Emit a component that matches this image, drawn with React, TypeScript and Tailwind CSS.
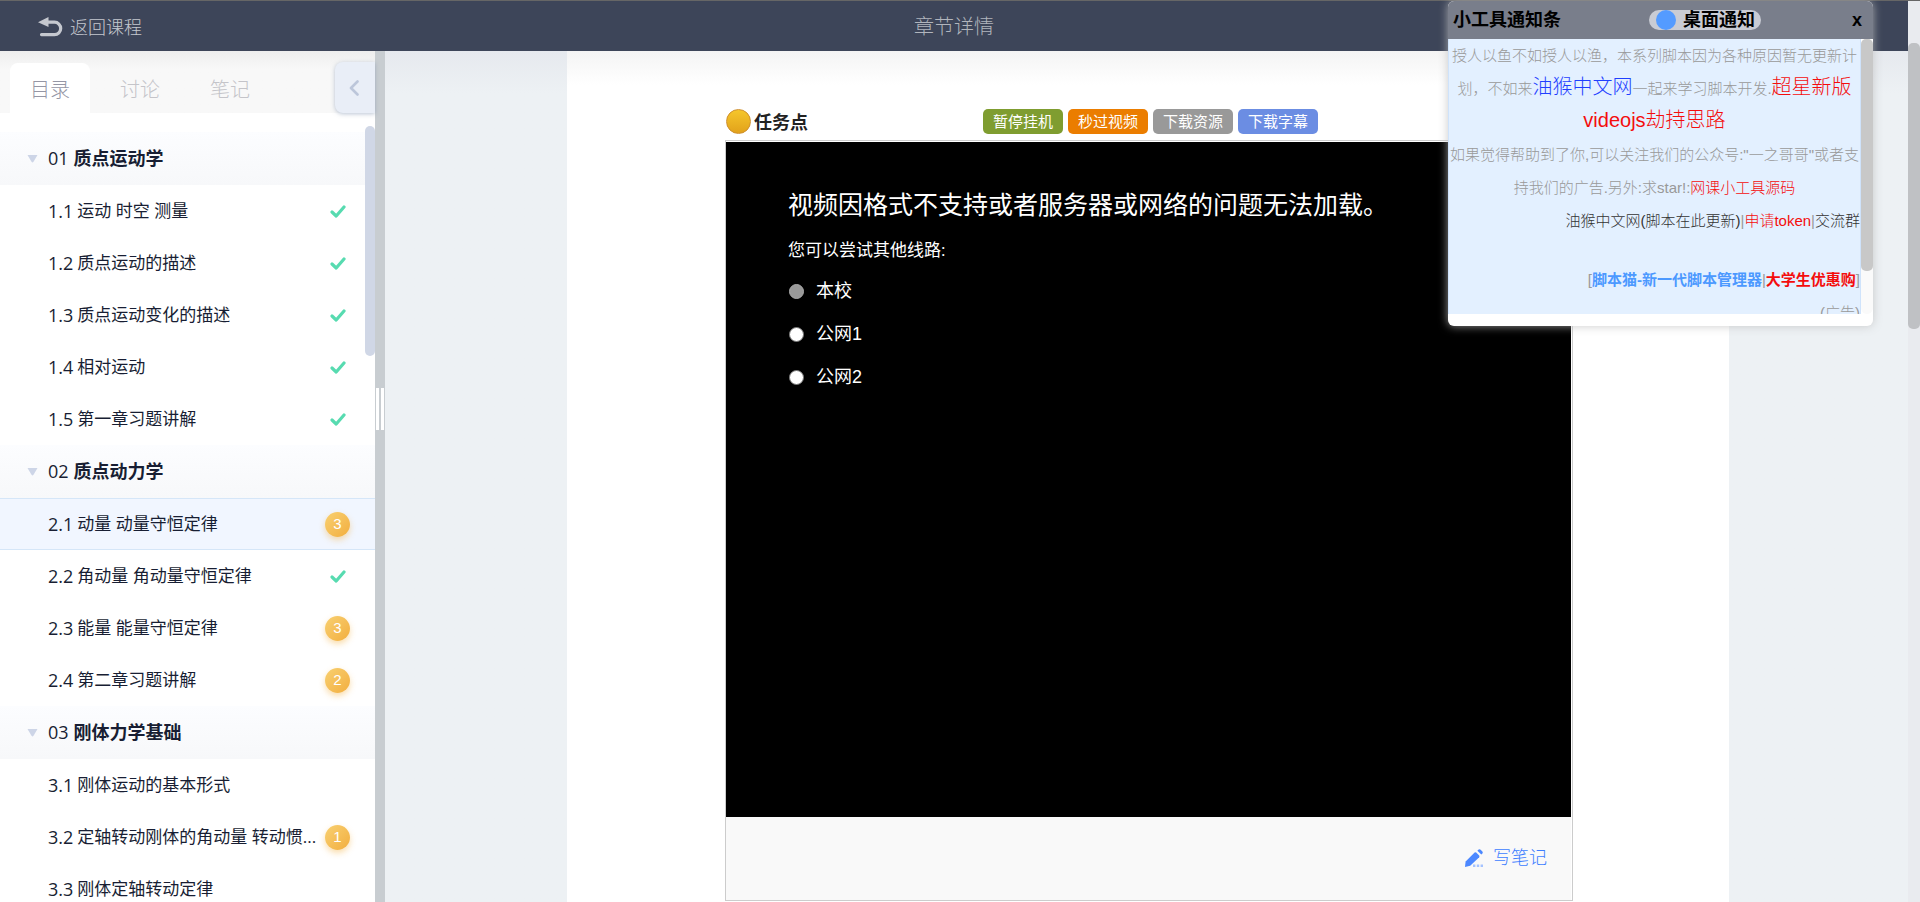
import React from "react";

type Status = { kind: "done" } | { kind: "pending"; count: number } | { kind: "none" };

interface Lesson {
  no: string;
  title: string;
  status: Status;
  active?: boolean;
}

interface Chapter {
  no: string;
  title: string;
  lessons: Lesson[];
}

const done: Status = { kind: "done" };
const none: Status = { kind: "none" };
const pending = (count: number): Status => ({ kind: "pending", count });

const chapters: Chapter[] = [
  {
    no: "01",
    title: "质点运动学",
    lessons: [
      { no: "1.1", title: "运动 时空 测量", status: done },
      { no: "1.2", title: "质点运动的描述", status: done },
      { no: "1.3", title: "质点运动变化的描述", status: done },
      { no: "1.4", title: "相对运动", status: done },
      { no: "1.5", title: "第一章习题讲解", status: done },
    ],
  },
  {
    no: "02",
    title: "质点动力学",
    lessons: [
      { no: "2.1", title: "动量 动量守恒定律", status: pending(3), active: true },
      { no: "2.2", title: "角动量 角动量守恒定律", status: done },
      { no: "2.3", title: "能量 能量守恒定律", status: pending(3) },
      { no: "2.4", title: "第二章习题讲解", status: pending(2) },
    ],
  },
  {
    no: "03",
    title: "刚体力学基础",
    lessons: [
      { no: "3.1", title: "刚体运动的基本形式", status: none },
      { no: "3.2", title: "定轴转动刚体的角动量 转动惯...", status: pending(1) },
      { no: "3.3", title: "刚体定轴转动定律", status: none },
    ],
  },
];

const actions = [
  { label: "暂停挂机", color: "bg-[#7f9d30]" },
  { label: "秒过视频", color: "bg-[#eb7d00]" },
  { label: "下载资源", color: "bg-[#999999]" },
  { label: "下载字幕", color: "bg-[#6b8de3]" },
];

const routes = [
  { id: "route-school", label: "本校", disabled: true },
  { id: "route-public-1", label: "公网1", disabled: false },
  { id: "route-public-2", label: "公网2", disabled: false },
];

function BackIcon() {
  return (
    <svg viewBox="0 0 25 20" className="h-5 w-[25px]" aria-hidden="true">
      <path d="M0 5.2 L10.5 0 V10 Z" fill="currentColor" />
      <path d="M8 5.2 H16.5 A6 6 0 0 1 16.5 17.6 H3.5" fill="none" stroke="currentColor" strokeWidth="3.2" strokeLinecap="round" />
    </svg>
  );
}

function CheckIcon() {
  return (
    <svg viewBox="0 0 16 13" className="h-[13px] w-4" aria-hidden="true">
      <path d="M2 7 L6.2 11 L14 2" fill="none" stroke="#57dbb0" strokeWidth="3.2" strokeLinecap="round" strokeLinejoin="round" />
    </svg>
  );
}

function PencilIcon() {
  return (
    <svg viewBox="0 0 18 18" className="size-[18px]" aria-hidden="true">
      <path d="M0 18 L0.6 12.6 L9.6 3.6 Q10.4 2.9 11.2 3.6 L14.2 6.6 Q14.8 7.4 14.2 8.2 L5.2 16.8 Z" fill="#4c88ff" />
      <path d="M12.4 1.8 L13.6 0.6 Q14.6 -0.1 15.6 0.7 L17.4 2.5 Q18.1 3.4 17.4 4.4 L16.3 5.6 Z" fill="#4c88ff" />
      <path d="M8 15.6h2.4v2.4H8z M11.8 15.6h2.4v2.4h-2.4z M15.6 15.6H18v2.4h-2.4z" fill="#a5c3ff" />
    </svg>
  );
}

function StatusMark({ status }: { status: Status }) {
  if (status.kind === "none") return null;
  return (
    <span className="flex w-[25px] shrink-0 items-center justify-center">
      {status.kind === "done" ? (
        <CheckIcon />
      ) : (
        <span className="flex size-[25px] items-center justify-center rounded-full bg-linear-to-br from-[#f8d070] to-[#f2ae3d] text-[15px] text-white shadow-[0_3px_6px_rgba(244,180,70,0.45)] font-['Liberation_Sans','Noto_Sans_CJK_SC',sans-serif]">
          {status.count}
        </span>
      )}
    </span>
  );
}

function Sidebar() {
  return (
    <aside className="relative flex w-[375px] shrink-0 flex-col bg-white">
      <div className="flex h-[62px] shrink-0 items-end bg-linear-to-b from-[#eeeeee] to-[#f8f8f8] to-30% pl-[10px] text-[20px] font-light">
        <button className="h-[50px] w-20 rounded-t-lg bg-white pt-1 text-[#9596a5]">目录</button>
        <button className="h-[50px] w-[100px] pt-1 text-[#c4c4c9]">讨论</button>
        <button className="h-[50px] w-20 pt-1 text-[#c4c4c9]">笔记</button>
        <button
          aria-label="收起目录"
          className="ml-auto flex h-[51px] w-10 items-center justify-center rounded-l-lg bg-[#e9eef7] pr-[2px] shadow-[0_1px_4px_rgba(120,140,170,0.5)]"
        >
          <svg viewBox="0 0 10 16" className="h-4 w-[10px]" aria-hidden="true">
            <path d="M8.5 1.5 L2 8 L8.5 14.5" fill="none" stroke="#bcc6da" strokeWidth="2.6" strokeLinecap="round" strokeLinejoin="round" />
          </svg>
        </button>
      </div>
      <nav className="min-h-0 flex-1 overflow-hidden pt-[19px] text-[17px] text-[#181e33]">
        {chapters.map((chapter) => (
          <section key={chapter.no}>
            <h2 className="flex h-[53px] items-center bg-linear-to-b from-[#fcfdff] to-[#f7f8fa] pl-[27px]">
              <svg viewBox="0 0 11 8" className="mr-[10px] h-2 w-[11px]" aria-hidden="true">
                <path d="M0.5 0 H10.5 L6.5 6.8 Q5.5 8 4.5 6.8 Z" fill="#cdd5e7" />
              </svg>
              <span className="mr-[5px] text-[18px] font-normal">{chapter.no}</span>
              <span className="text-[18px] font-bold">{chapter.title}</span>
            </h2>
            <ul>
              {chapter.lessons.map((lesson) => (
                <li key={lesson.no}>
                  <a
                    href={"#" + lesson.no}
                    className={
                      lesson.active
                        ? "flex h-[52px] items-center border-y border-[#d5e6f8] bg-[#f1f6ff] pl-12 pr-[25px]"
                        : "flex h-[52px] items-center pl-12 pr-[25px]"
                    }
                  >
                    <span className="mr-1 shrink-0 text-[18px]">{lesson.no}</span>
                    <span className="min-w-0 flex-1 whitespace-nowrap">{lesson.title}</span>
                    <StatusMark status={lesson.status} />
                  </a>
                </li>
              ))}
            </ul>
          </section>
        ))}
      </nav>
      <div className="absolute right-0 top-[75px] h-[230px] w-[10px] rounded-full bg-[#d0d7e6]" />
    </aside>
  );
}

function VideoTask() {
  return (
    <section>
      <div className="flex h-[25px] items-center">
        <span className="ml-px size-[25px] rounded-full border border-[#cf8f2c] bg-linear-to-b from-[#f5c62b] to-[#e2a21b]" />
        <h1 className="ml-[3px] pt-[2px] text-[18px] font-bold text-[#222222]">任务点</h1>
        <div className="ml-[175px] flex gap-[5px]">
          {actions.map((a) => (
            <button key={a.label} className={"h-[25px] w-20 rounded-[5px] text-[15px] leading-[25px] text-white " + a.color}>
              {a.label}
            </button>
          ))}
        </div>
      </div>
      <div className="mt-[6px] border border-[#cccccc] pr-px pt-px">
        <div className="h-[675px] bg-black pl-[62px] pt-[42px] text-white">
          <p className="text-[25px] leading-10">视频因格式不支持或者服务器或网络的问题无法加载。</p>
          <p className="mt-[14px] text-[17px] leading-6">您可以尝试其他线路:</p>
          <div className="mt-2">
            {routes.map((r) => (
              <div key={r.id} className="flex h-[43px] items-center">
                <input
                  type="radio"
                  id={r.id}
                  name="route"
                  disabled={r.disabled}
                  className="ml-px size-[15px] appearance-none rounded-full border border-[#767676] bg-white disabled:border-[#aaaaaa] disabled:bg-[#999999]"
                />
                <label htmlFor={r.id} className="ml-3 text-[18px] font-['Liberation_Sans','Noto_Sans_CJK_SC',sans-serif]">
                  {r.label}
                </label>
              </div>
            ))}
          </div>
        </div>
        <div className="flex h-[83px] items-center justify-end bg-[#f9f9f9] pb-[2px] pr-6">
          <a href="#note" className="flex items-center gap-[10px] text-[18px] font-light text-[#3d7dff]">
            <PencilIcon />
            写笔记
          </a>
        </div>
      </div>
    </section>
  );
}

function NoticePanel() {
  return (
    <div className="absolute right-[47px] top-px w-[425px] overflow-hidden rounded-[6px] bg-white font-['Liberation_Sans','Noto_Sans_CJK_SC',sans-serif] shadow-[0_0_10px_rgba(190,190,190,0.8)]">
      <div className="flex h-[38px] items-center bg-[#797e8b] pl-[5px] pr-[11px] text-[18px] font-bold text-black">
        <span>小工具通知条</span>
        <button className="ml-auto mr-[91px] flex h-5 items-center gap-[7px] rounded-full bg-[#c9ccd4] pl-[7px] pr-[6px] leading-5">
          <span className="size-5 rounded-full bg-[#549bff]" />
          桌面通知
        </button>
        <button aria-label="关闭">x</button>
      </div>
      <div className="flex h-[275px]">
        <div className="min-w-0 flex-1 overflow-hidden border-x border-[#cfe3fb] bg-[#e3f0ff] text-center text-[15px] font-light leading-[33px] text-[#999999]">
          <p>
            授人以鱼不如授人以渔，本系列脚本因为各种原因暂无更新计
            <br />
            划，不如来
            <a href="#forum" className="text-[20px] leading-none text-[#1f3fff]">油猴中文网</a>
            一起来学习脚本开发.
            <a href="#videojs" className="text-[20px] leading-none text-[#f40d0d]">
              超星新版
              <br />
              videojs劫持思路
            </a>
          </p>
          <p className="whitespace-nowrap">
            如果觉得帮助到了你,可以关注我们的公众号:"一之哥哥"或者支
            <br />
            持我们的广告.另外:求star!:
            <a href="#source" className="text-[#f40d0d]">网课小工具源码</a>
          </p>
          <p className="text-right">
            <a href="#update" className="text-[#333333]">油猴中文网(脚本在此更新)</a>|
            <a href="#token" className="text-[#f40d0d]">申请token</a>|
            <a href="#group" className="text-[#333333]">交流群</a>
          </p>
          <p className="mt-[26px] text-right">
            [<a href="#scriptcat" className="font-bold text-[#4c99ff]">脚本猫-新一代脚本管理器</a>|
            <a href="#sale" className="font-bold text-[#f40d0d]">大学生优惠购</a>]
            <br />
            (广告)
          </p>
        </div>
        <div className="w-3 rounded-full bg-[#fafafa]">
          <div className="h-[232px] rounded-[5px] bg-[#c8c8c8]" />
        </div>
      </div>
      <div className="h-3" />
    </div>
  );
}

export default function App() {
  return (
    <div className="relative flex h-screen overflow-hidden bg-[#edf1f4] font-['Open_Sans','Noto_Sans_CJK_SC',sans-serif]">
      <div className="flex min-w-0 flex-1 flex-col">
        <header className="relative flex h-[51px] shrink-0 items-center justify-center border-t border-[#666666] bg-[#3d4559] pt-[2px]">
          <a href="#course" className="absolute left-[38px] flex items-center gap-[7px] text-[18px] font-light text-[#c5c8cf]">
            <BackIcon />
            返回课程
          </a>
          <span className="text-[20px] font-light text-[#b1b5bd]">章节详情</span>
        </header>
        <div className="flex min-h-0 flex-1">
          <Sidebar />
          <div className="flex w-[10px] shrink-0 items-start justify-center gap-[2px] bg-[#c8cdd1] pt-[337px]">
            <span className="h-[42px] w-[3px] bg-white" />
            <span className="h-[42px] w-[3px] bg-white" />
          </div>
          <main className="min-w-0 flex-1 bg-linear-to-b from-[#e6e9ee] to-[#edf1f4] to-5% pl-[182px] pr-[179px]">
            <div className="h-full bg-linear-to-b from-[#f4f4f4] to-white to-4% pl-[158px] pr-[156px] pt-[58px]">
              <VideoTask />
            </div>
          </main>
        </div>
      </div>
      <div className="w-3 shrink-0 border-t border-[#666666] bg-[#e9ebef] pt-[42px]">
        <div className="h-[286px] rounded-[5px] bg-[#bfc1c4]" />
      </div>
      <NoticePanel />
    </div>
  );
}
